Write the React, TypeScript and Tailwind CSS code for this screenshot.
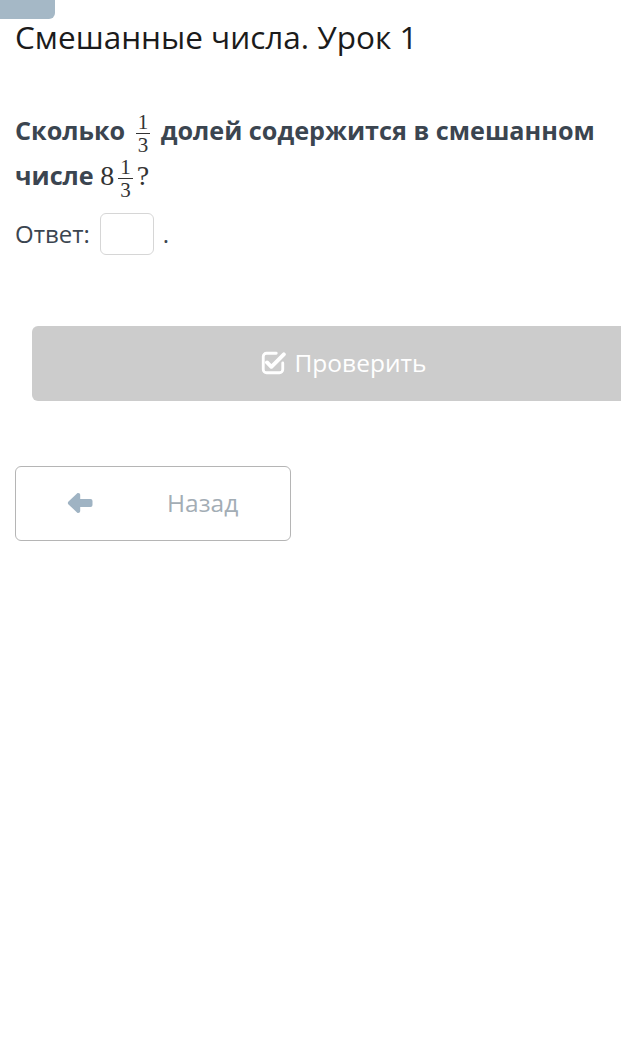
import React from 'react';

const Frac: React.FC<{ num: string; den: string }> = ({ num, den }) => (
  <span className="inline-flex flex-col items-center align-middle mx-[4px] font-['Liberation_Serif',serif] font-normal text-[21px] leading-[16px] text-[#333]">
    <span className="px-[2px]">{num}</span>
    <span className="w-full h-px bg-[#333] my-[3px]"></span>
    <span className="px-[2px]">{den}</span>
  </span>
);

const CheckSquare = () => (
  <svg viewBox="0 0 24 24" className="w-[26px] h-[26px]" fill="none" stroke="currentColor">
    <path d="M15 3H6a3 3 0 0 0-3 3v12a3 3 0 0 0 3 3h12a3 3 0 0 0 3-3v-6" strokeWidth="2.6" strokeLinecap="round" />
    <path d="M6.5 11.5l4 4L22 4" strokeWidth="3.6" strokeLinecap="round" strokeLinejoin="round" />
  </svg>
);

const ArrowLeft = () => (
  <svg viewBox="0 0 26 22" className="w-[26px] h-[22px]" fill="currentColor">
    <path d="M1.5 9.6L10 1.6c1.2-1.1 3.2-.3 3.2 1.4V7H23.5a2 2 0 0 1 2 2v4a2 2 0 0 1-2 2H13.2v4c0 1.7-2 2.5-3.2 1.4L1.5 12.4a2 2 0 0 1 0-2.8z" />
  </svg>
);

export default function App() {
  return (
    <div className="w-[621px] min-h-[1060px] overflow-hidden bg-white font-['Open_Sans',sans-serif]">
      <div className="w-[55px] h-[19px] bg-[#a5b8c6] rounded-br-md"></div>

      <div className="px-[15px]">
        <h1 className="text-[31.5px] leading-[36px] text-[#1b1b1b]">Смешанные числа. Урок 1</h1>

        <p className="mt-[53px] text-[25.2px] leading-[44px] font-bold text-[#3b4550]">
          Сколько <Frac num="1" den="3" /> долей содержится в смешанном числе{' '}
          <span className="font-['Liberation_Serif',serif] font-normal text-[28px] text-[#333]">8</span>
          <Frac num="1" den="3" />
          <span className="font-['Liberation_Serif',serif] font-normal text-[28px] text-[#333]">?</span>
        </p>

        <div className="mt-[15px] flex items-center text-[24px] text-[#3b4550]">
          <span>Ответ:</span>
          <span className="ml-[10px] w-[54px] h-[42px] rounded-md border border-[#d6d6d6] bg-white"></span>
          <span className="ml-[9px]">.</span>
        </div>
      </div>

      <div className="pl-[32px] mt-[71px]">
        <button className="w-[622px] h-[75px] rounded-md bg-[#cccccc] text-white flex items-center justify-center gap-[9px] text-[24.5px]">
          <CheckSquare />
          <span>Проверить</span>
        </button>
      </div>

      <div className="px-[15px] mt-[65px]">
        <button className="w-[276px] h-[75px] rounded-md border border-[#b5b5b5] bg-white flex items-center text-[24.5px] text-[#a3adb5]">
          <span className="ml-[51px] text-[#9fb3c3]"><ArrowLeft /></span>
          <span className="ml-[74px]">Назад</span>
        </button>
      </div>
    </div>
  );
}
